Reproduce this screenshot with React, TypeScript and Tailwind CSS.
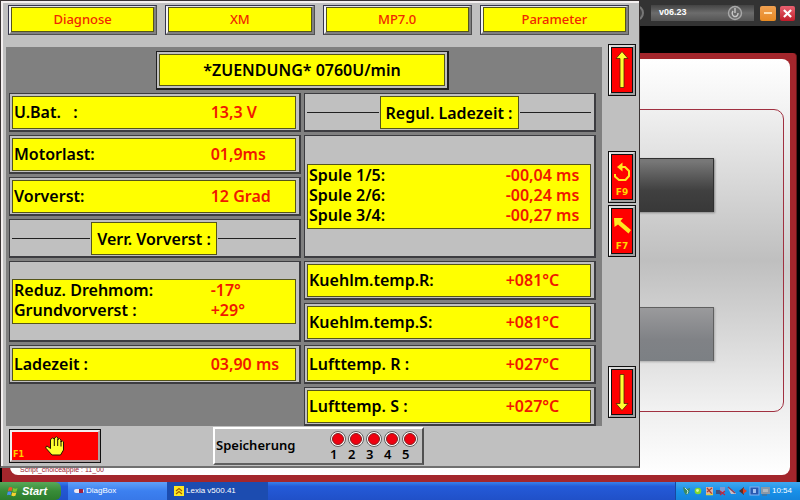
import type { ReactNode } from "react";

type Reading = { label: string; value: string };

const tabs = ["Diagnose", "XM", "MP7.0", "Parameter"];

const slots = [1, 2, 3, 4, 5];

function Cell({ children, className = "h-[39px]" }: { children: ReactNode; className?: string }) {
  return (
    <div
      className={`flex flex-col justify-center border-t border-l border-r-2 border-b-2 border-[#3c3c40] bg-[#c0c0c0] pt-[2px] pr-[3px] pb-px pl-[2px] ${className}`}
    >
      {children}
    </div>
  );
}

function Readings({ items, className }: { items: Reading[]; className?: string }) {
  return (
    <Cell className={className}>
      <dl
        className={`flex flex-col justify-center border border-[#55551a] bg-[#ffff00] pl-px ${
          items.length === 1 ? "h-[33px] pb-px" : "pb-[3px]"
        }`}
      >
        {items.map((item) => (
          <div key={item.label} className="grid grid-cols-[7fr_3fr] leading-5 whitespace-pre">
            <dt>{item.label}</dt>
            <dd className="text-[#f01800]">{item.value}</dd>
          </div>
        ))}
      </dl>
    </Cell>
  );
}

function Divider({ title }: { title: string }) {
  return (
    <Cell>
      <div className="flex items-center gap-px">
        <span className="h-px flex-1 bg-[#202020]" />
        <h2 className="flex h-[33px] items-center border border-[#55551a] bg-[#ffff00] px-[5px] whitespace-nowrap">
          {title}
        </h2>
        <span className="h-px flex-1 bg-[#202020]" />
      </div>
    </Cell>
  );
}

function SideButton({ label, children, caption }: { label: string; children: ReactNode; caption?: string }) {
  return (
    <button aria-label={label} className="h-[52px] w-7 border border-[#101010] bg-[#c0c0c0]">
      <span className="flex h-full flex-col items-center justify-between border-2 border-t-[#d8d8d8] border-r-[#a0a0a0] border-b-[#a0a0a0] border-l-white">
        <span className="flex w-full flex-1 flex-col items-center justify-center border border-[#101010] bg-[#ff0000]">
          {children}
          {caption && (
            <span className="font-['DejaVu_Sans',sans-serif] text-[9px] leading-[10px] font-bold text-[#ffd800]">
              {caption}
            </span>
          )}
        </span>
      </span>
    </button>
  );
}

function LongArrow({ down = false }: { down?: boolean }) {
  return (
    <svg viewBox="0 0 14 38" className={`h-[38px] w-[14px] ${down ? "rotate-180" : ""}`}>
      <path
        d="M7 .5 L13 7.5 H9 V36.5 H5 V7.5 H1 Z"
        fill="#ffff30"
        stroke="#502800"
        strokeWidth=".8"
      />
    </svg>
  );
}

function HandIcon() {
  return (
    <svg viewBox="0 0 20 20" className="h-5 w-5">
      <path
        d="M5.5 12.5 L2 10 Q-.2 10.5 1.2 12.5 L7 19 H15.5 L18.5 14 V6 Q17.3 3.5 16 6 V4 Q14.6 1 13 3.5 V2 Q11.5 -.5 9.5 2 V3 Q7.8 .5 5.5 3.5 Z"
        fill="#ffff30"
        stroke="#201000"
        strokeWidth="1"
      />
      <path d="M9.3 3 V10 M12.7 3 V10 M16 5 V10.5" stroke="#201000" strokeWidth="1" />
    </svg>
  );
}

function LexiaWindow() {
  return (
    <main className="absolute top-0 left-0 z-10 flex w-4/5 flex-col border border-b-2 border-[#3a3434] border-b-[#707070] bg-[#c0c0c0] font-['Noto_Sans',sans-serif] text-base font-semibold text-black">
      <div className="flex flex-col border-t-2 border-l-2 border-t-[#f4f0f0] border-l-[#f4f0f0]">
        <nav className="grid grid-cols-4 gap-2 pt-[2px] pr-[10px] pl-[5px]">
          {tabs.map((tab) => (
            <button
              key={tab}
              className="border border-[#34344c] border-r-[#505050] border-b-[#505050] bg-[#ffff00] text-[13px] leading-[23px] font-medium text-[#f02800]"
            >
              <span className="block border-t border-r-2 border-b-2 border-l-2 border-t-[#e4e4e8] border-r-[#808080] border-b-[#808080] border-l-[#f4f4f4]">
                <span className="block border border-[#55551a]">{tab}</span>
              </span>
            </button>
          ))}
        </nav>

        <div className="flex pt-[9px] pl-[3px]">
          <section className="mt-[3px] flex-1 bg-[#808080] pt-1 pr-[6px] pl-[3px]">
            <h1 className="mx-auto mb-[3px] h-[39px] w-1/2 border-t border-l border-r-2 border-b-2 border-[#202020] bg-[#c0c0c0] p-[2px]">
              <span className="flex h-full items-center justify-center border border-[#55551a] bg-[#ffff00]">
                *ZUENDUNG* 0760U/min
              </span>
            </h1>
            <div className="grid grid-cols-2 gap-[3px]">
              <div className="flex flex-col gap-[3px]">
                <Readings items={[{ label: "U.Bat.   :", value: "13,3 V" }]} />
                <Readings items={[{ label: "Motorlast:", value: "01,9ms" }]} />
                <Readings items={[{ label: "Vorverst:", value: "12 Grad" }]} />
                <Divider title="Verr. Vorverst :" />
                <Readings
                  className="h-[81px]"
                  items={[
                    { label: "Reduz. Drehmom:", value: "-17°" },
                    { label: "Grundvorverst :", value: "+29°" },
                  ]}
                />
                <Readings items={[{ label: "Ladezeit :", value: "03,90 ms" }]} />
              </div>
              <div className="flex flex-col gap-[3px]">
                <Divider title="Regul. Ladezeit :" />
                <Readings
                  className="h-[123px]"
                  items={[
                    { label: "Spule 1/5:", value: "-00,04 ms" },
                    { label: "Spule 2/6:", value: "-00,24 ms" },
                    { label: "Spule 3/4:", value: "-00,27 ms" },
                  ]}
                />
                <Readings items={[{ label: "Kuehlm.temp.R:", value: "+081°C" }]} />
                <Readings items={[{ label: "Kuehlm.temp.S:", value: "+081°C" }]} />
                <Readings items={[{ label: "Lufttemp. R :", value: "+027°C" }]} />
                <Readings items={[{ label: "Lufttemp. S :", value: "+027°C" }]} />
              </div>
            </div>
          </section>

          <aside className="flex flex-col pr-[3px] pb-2 pl-[6px]">
            <SideButton label="Nach oben">
              <LongArrow />
            </SideButton>
            <div className="grow" />
            <SideButton label="Wiederholen" caption="F9">
              <svg viewBox="0 0 20 26" className="h-[30px] w-5" fill="none" stroke="#ffe820" strokeWidth="2">
                <path d="M9 8 H13 L17 12 V17 L13.500 21 H7 L3 17.500 V15" />
                <path d="M5 8 L10.500 3.500 V12.500 Z" fill="#ffe820" stroke="none" />
              </svg>
            </SideButton>
            <div className="h-[2px]" />
            <SideButton label="Zurück" caption="F7">
              <svg viewBox="0 0 20 26" className="h-[30px] w-5">
                <path d="M2 5 H11 L8.500 8 L19 17 L16.500 20.500 L6 11.500 L2.500 14 Z" fill="#ffe820" />
              </svg>
            </SideButton>
            <div className="grow-2" />
            <SideButton label="Nach unten">
              <LongArrow down />
            </SideButton>
          </aside>
        </div>

        <footer className="flex items-start pt-px pb-px pl-[6px]">
          <button
            aria-label="Stop F1"
            className="relative mt-[2px] flex h-[34px] w-[92px] items-center justify-center border border-[#101010] bg-[#ff0000]"
          >
            <span className="absolute inset-0 border-2 border-[#f0f0f0] border-r-[#b0a0a0] border-b-[#b0a0a0]" />
            <HandIcon />
            <span className="absolute bottom-[3px] left-[3px] font-['DejaVu_Sans',sans-serif] text-[8px] leading-[8px] font-bold text-[#ffd000]">
              F1
            </span>
          </button>
          <div className="ml-28 flex h-[38px] w-[211px] items-center justify-between border-2 border-white border-r-[#505050] border-b-[#606060] pr-[2px] pl-px">
            <span className="text-[13px]">Speicherung</span>
            <ol className="flex">
              {slots.map((slot) => (
                <li key={slot} className="w-[18px] text-[13px] leading-[15px]">
                  <span className="block size-4 rounded-full border border-[#606060] bg-white p-px">
                    <span className="block size-full rounded-full border border-[#802020] bg-[#f00010]" />
                  </span>
                  {slot}
                </li>
              ))}
            </ol>
          </div>
        </footer>
      </div>
    </main>
  );
}

function DiagBoxWindow() {
  return (
    <div className="flex flex-1 flex-col bg-black">
      <header className="flex h-[26px] items-center justify-end gap-1 bg-[#333333] pr-[5px] font-['Liberation_Sans',sans-serif]">
        <span className="mr-[3px] size-4 rounded-full border-2 border-[#777777] bg-[#444444]" />
        <div className="flex h-4 w-[103px] items-center justify-between bg-linear-to-b from-[#444444] via-[#6c6c6c] to-[#555555] pr-[11px] pl-2">
          <span className="text-[9px] font-bold text-white">v06.23</span>
          <svg viewBox="0 0 16 16" className="h-4 w-4" fill="none">
            <circle cx="8" cy="8" r="6.5" fill="#6a6a6a" stroke="#a8a8a8" strokeWidth="1.4" />
            <path d="M8 3 V8 M6 6 Q4 9 7 11.5 Q11 12 11 8" stroke="#c8c8c8" strokeWidth="1.4" />
          </svg>
        </div>
        <button
          aria-label="Minimieren"
          className="ml-[2px] flex h-[15px] w-4 items-center justify-center rounded-[2px] bg-linear-to-b from-[#f0a050] to-[#e88a20]"
        >
          <span className="h-[2px] w-2 bg-[#ffe0b0]" />
        </button>
        <button
          aria-label="Schließen"
          className="flex h-[15px] w-[15px] items-center justify-center rounded-[2px] bg-linear-to-b from-[#e86070] to-[#c01828]"
        >
          <svg viewBox="0 0 10 10" className="h-[9px] w-[9px]" stroke="white" strokeWidth="2.4">
            <path d="M1 1 L9 9 M9 1 L1 9" />
          </svg>
        </button>
      </header>

      <div className="mt-[27px] mr-[3px] ml-[2px] flex flex-1 rounded-t-[4px] border-r border-[#601818] bg-[#a3262c] pt-[6px] pr-[6px] pb-[7px] pl-2">
        <div className="flex flex-1 flex-col rounded-lg bg-linear-to-b from-white via-[#cccccc] to-white pr-[6px] pl-2">
          <div className="mt-[50px] flex h-[303px] flex-col items-end rounded-[10px] border border-[#a03040] bg-linear-to-b from-[#f0f0f0] via-[#bfbfbf] via-50% to-[#f2f2f2] pt-12 pr-[69px]">
            <div className="h-[54px] w-1/4 border-t border-r border-[#303030] bg-linear-to-b from-[#777777] from-5% via-[#404040] via-60% to-[#383838] shadow-[1px_1px_2px_#888888]" />
            <div className="mt-[95px] h-[54px] w-1/4 border-t border-r border-[#606060] bg-linear-to-b from-[#9a9a9c] via-[#808286] via-60% to-[#7c8084] shadow-[1px_1px_2px_#aaaaaa]" />
          </div>
          <p className="mt-auto pb-px pl-[2px] font-['Liberation_Sans',sans-serif] text-[7px] leading-[9px] text-[#a02030]">
            Script_choiceapple : 11_00
          </p>
        </div>
      </div>
    </div>
  );
}

function TrayIcons() {
  return (
    <svg viewBox="0 0 90 12" className="h-3 w-[90px]">
      <path d="M1 2 L5 4 L8 3 L7 8 L4 10 L2 7 Z" fill="#3a8a60" />
      <path d="M3 3 L6 6 L5 9" stroke="#c8e8d8" strokeWidth="1" fill="none" />
      <circle cx="16" cy="6" r="3.3" fill="#80d830" />
      <circle cx="15.5" cy="5.5" r="1.4" fill="#d8f8a0" />
      <rect x="24" y="2" width="7" height="8" fill="#e0b0a0" />
      <path d="M25 3 L30 9 M30 3 L25 7" stroke="#b04030" strokeWidth="1.2" />
      <path d="M24 9.5 H31" stroke="#e0d040" strokeWidth="1.5" />
      <rect x="34" y="5" width="5" height="4" fill="#405080" />
      <rect x="38" y="2" width="5" height="5" fill="#8098d0" />
      <path d="M38 6 L43 10 M43 6 L38 10" stroke="#c02840" strokeWidth="1.3" />
      <path d="M46 3 L52 6 L54 9 L49 9 Z" fill="#c8c0c8" />
      <path d="M46 2 L53 8" stroke="#904058" strokeWidth="1.5" />
      <path d="M57 6 L62 2 V10 Z" fill="#503030" />
      <path d="M61 3 L65 6 L61 9 Z" fill="#e04020" />
      <rect x="68" y="2" width="9" height="8" fill="#2858b0" stroke="#80b0f0" />
      <rect x="71" y="4" width="3" height="4" fill="#a0c0f0" />
      <rect x="79" y="2" width="9" height="7" fill="#8a98a8" />
      <rect x="81" y="4" width="5" height="3" fill="#b0b8c0" />
      <path d="M80 10 H85" stroke="#606878" />
    </svg>
  );
}

function Taskbar() {
  return (
    <footer className="flex h-[18px] items-stretch bg-linear-to-b from-[#3a80e8] via-[#245ad8] via-25% to-[#2050c8] font-['Liberation_Sans',sans-serif] text-[8px] text-white">
      <button className="flex w-[61px] items-center gap-1 rounded-r-md bg-linear-to-b from-[#58a858] via-[#388c38] to-[#2c7c2c] pl-[7px] text-[11px] font-bold italic">
        <svg viewBox="0 0 12 12" className="h-[11px] w-[11px]">
          <path d="M2 1.5 Q4 .5 6 2 L5 5.5 Q3 4.5 1 5.5 Z" fill="#f05828" />
          <path d="M6.8 2.3 Q9 3.5 11.5 2.3 L10.5 6 Q8 7 6 5.8 Z" fill="#80c830" />
          <path d="M.8 6.3 Q3 5.5 4.8 6.6 L3.8 10 Q2 9 0 10 Z" fill="#4890f0" />
          <path d="M5.7 6.8 Q8 8 10.2 7 L9.2 10.6 Q7 11.6 4.7 10.4 Z" fill="#f8d030" />
        </svg>
        Start
      </button>
      <button className="ml-[7px] flex w-[99px] items-center gap-[2px] bg-linear-to-b from-[#60a0f8] via-[#3c80f0] to-[#3878e8] pl-[6px]">
        <svg viewBox="0 0 10 6" className="h-[6px] w-[10px]">
          <rect y="1" width="10" height="4" rx="2" fill="#f0e8f0" />
          <rect x="5" y="1" width="4" height="4" fill="#a02040" />
        </svg>
        DiagBox
      </button>
      <button className="flex w-[101px] items-center gap-[2px] bg-[#1c4cb0] pl-[7px]">
        <svg viewBox="0 0 10 10" className="h-[10px] w-[10px]">
          <rect width="10" height="10" fill="#ffe820" />
          <path d="M2 5 L5 2.5 L8 5 M2 8 L5 5.5 L8 8" stroke="#a06000" strokeWidth="1.2" fill="none" />
        </svg>
        Lexia v500.41
      </button>
      <div className="ml-auto flex w-[125px] items-center justify-between border-l border-[#1848a0] bg-linear-to-b from-[#40a8f0] via-[#1890e8] to-[#1484dc] pr-2 pl-[6px]">
        <TrayIcons />
        <time>10:54</time>
      </div>
    </footer>
  );
}

export default function App() {
  return (
    <div className="relative flex min-h-screen flex-col overflow-hidden bg-black">
      <DiagBoxWindow />
      <LexiaWindow />
      <Taskbar />
    </div>
  );
}
